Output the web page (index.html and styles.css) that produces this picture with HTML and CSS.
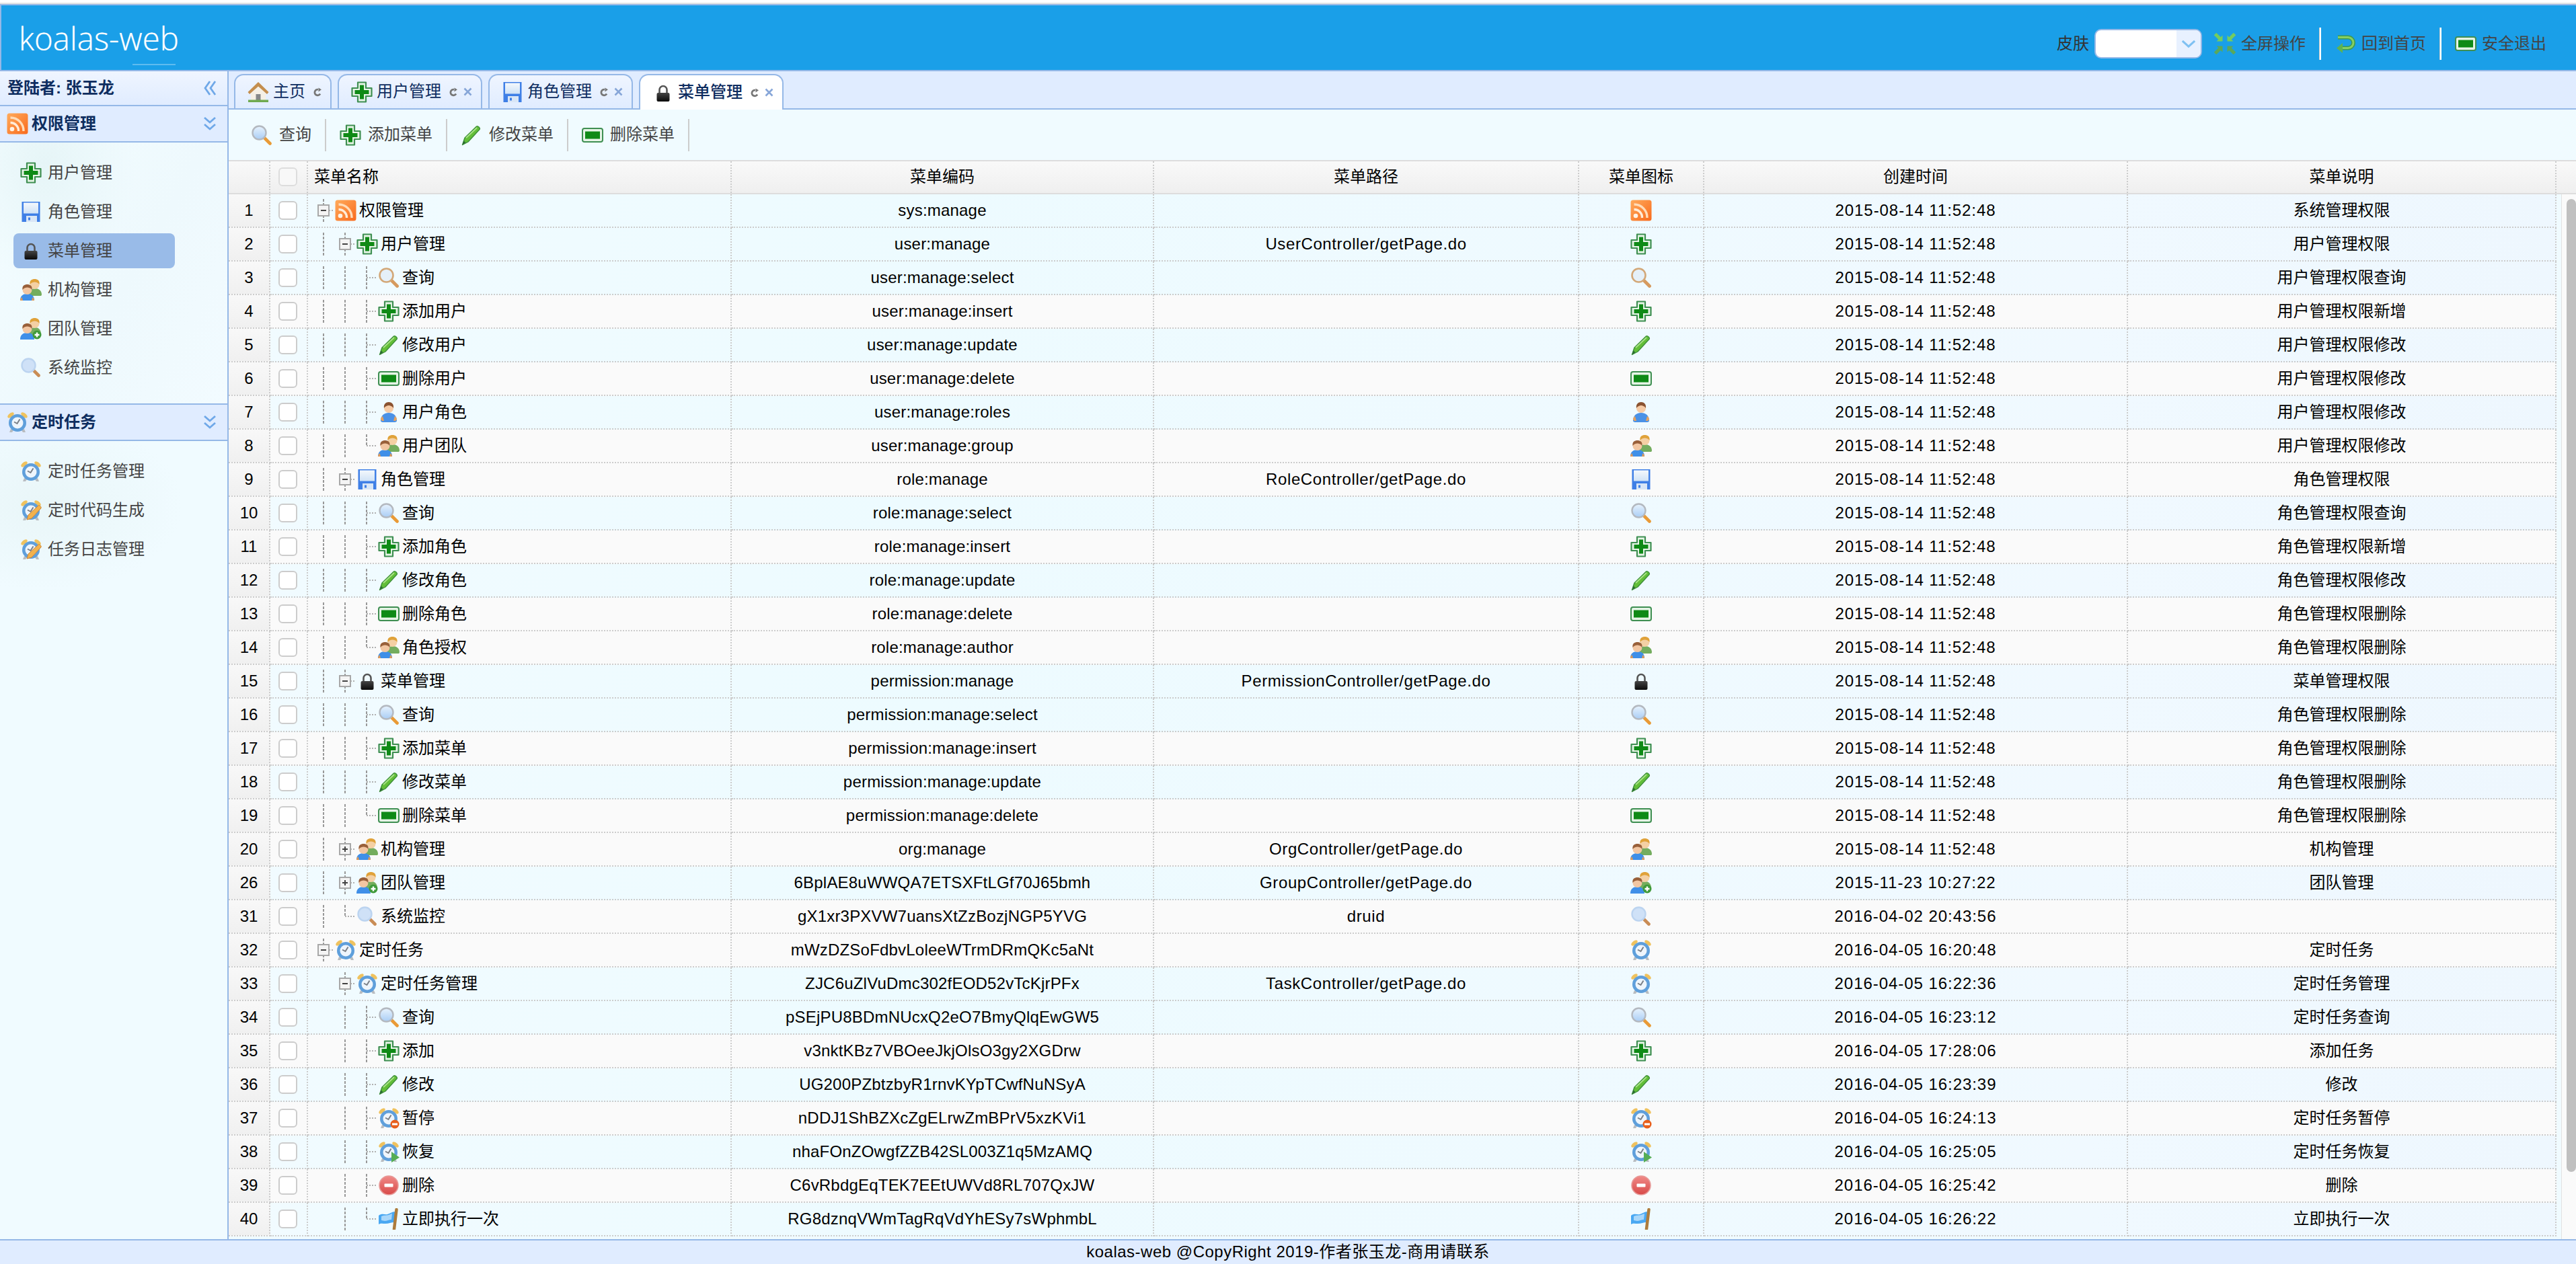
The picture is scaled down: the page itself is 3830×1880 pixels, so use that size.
FILE: index.html
```html
<!DOCTYPE html>
<html lang="zh-CN">
<head>
<meta charset="utf-8">
<title>koalas-web</title>
<link rel="stylesheet" href="styles.css">
</head>
<body>
<svg class="defs" xmlns="http://www.w3.org/2000/svg">
  <defs>
    <linearGradient id="gO" x1="0" y1="0" x2="1" y2="1"><stop offset="0" stop-color="#ffab5c"/><stop offset="1" stop-color="#f96a1c"/></linearGradient>
    <linearGradient id="gL" x1="0" y1="0" x2="0" y2="1"><stop offset="0" stop-color="#e8f3fd"/><stop offset="1" stop-color="#a9cdf5"/></linearGradient>
    <linearGradient id="gK" x1="0" y1="0" x2="0" y2="1"><stop offset="0" stop-color="#444"/><stop offset="1" stop-color="#0a0a0a"/></linearGradient>
    <linearGradient id="gR" x1="0" y1="0" x2="0" y2="1"><stop offset="0" stop-color="#f08a88"/><stop offset="1" stop-color="#d84a48"/></linearGradient>
    <linearGradient id="gF" x1="0" y1="0" x2="0" y2="1"><stop offset="0" stop-color="#f4f8fc"/><stop offset="1" stop-color="#cfe2f6"/></linearGradient>
    <symbol id="i-plus" viewBox="0 0 32 32"><path d="M10 1.500h12v8.500h8.500v12H22v8.500H10V22H1.500V10H10z" fill="#e6f4e6" stroke="#3f8f52" stroke-width="2.200" stroke-linejoin="round"/><path d="M13 5.500h6V13h7.500v6H19v7.500h-6V19H5.500v-6H13z" fill="#0f8a16"/></symbol>
    <symbol id="i-rss" viewBox="0 0 32 32"><rect x="0.500" y="0.500" width="31" height="31" rx="3.500" fill="url(#gO)"/><circle cx="8" cy="24" r="3.300" fill="#fff2e4"/><path d="M5.500 14.500A12 12 0 0 1 17.500 27" fill="none" stroke="#ffecd8" stroke-width="3.400"/><path d="M5.500 7A19.500 19.500 0 0 1 25 27" fill="none" stroke="#ffdcb8" stroke-width="3.400"/></symbol>
    <symbol id="i-search" viewBox="0 0 32 32"><path d="M20 20l8.500 8.500" stroke="#e99a36" stroke-width="4.600" stroke-linecap="round"/><circle cx="12.500" cy="12.500" r="10" fill="url(#gL)" stroke="#b4b9c0" stroke-width="2.400"/></symbol>
    <symbol id="i-search-t" viewBox="0 0 32 32"><path d="M20 20l8.500 8.500" stroke="#d69a5e" stroke-width="4.800" stroke-linecap="round"/><circle cx="12.500" cy="12.500" r="10" fill="#e5f0f8" stroke="#d3a878" stroke-width="2.600"/></symbol>
    <symbol id="i-search-m" viewBox="0 0 32 32"><path d="M20 20l7.500 7.500" stroke="#c98c55" stroke-width="4.600" stroke-linecap="round"/><circle cx="12.500" cy="12.500" r="10" fill="#cfe1f7" stroke="#bcd4f0" stroke-width="2.400"/></symbol>
    <symbol id="i-edit" viewBox="0 0 32 32"><path d="M2.500 30.500L6 20 23.500 3c2-1.500 6 2.500 4.500 4.500L11 26z" fill="#62be38" stroke="#3d8f3a" stroke-width="1.400" stroke-linejoin="round"/><path d="M8 20L24 5" stroke="#a9e288" stroke-width="1.800"/><path d="M2.500 30.500L4.500 24.500l3 2.500z" fill="#2c6a35"/></symbol>
    <symbol id="i-minus" viewBox="0 0 32 32"><rect x="1" y="6" width="30" height="20" rx="3" fill="#e6f4e6" stroke="#3f8f52" stroke-width="2"/><rect x="5" y="10.500" width="22" height="11" fill="#0f8a16"/></symbol>
    <symbol id="i-user" viewBox="0 0 32 32"><path d="M4 29c0-8 5-12 12-12s12 4 12 12c0 1-2 2-3 2H7c-1 0-3-1-3-2z" fill="#4a91e6"/><path d="M4 27c0-2 1-4 3-5l2 7H6zM28 27c0-2-1-4-3-5l-2 7h3z" fill="#e8a25e"/><circle cx="16" cy="10" r="7" fill="#f6cba6"/><path d="M9 10c-1-6 3-9 7-9s8 3 7 9c-2-3-5-4-7-4s-5 1-7 4z" fill="#8a5230"/></symbol>
    <symbol id="i-users" viewBox="0 0 32 32"><path d="M13 25c0-8 4-11 9-11s10 3 10 9c0 1-1 2-1 2z" fill="#74ad5e"/><circle cx="21.500" cy="8" r="7" fill="#f4d0a4"/><path d="M14.500 8c-1-6 3-8 7-8s8 2 7 8c-2-3-5-3.500-7-3.500s-5 .5-7 3.500z" fill="#e0a23a"/><path d="M0 32c0-7 4-10 10.500-10S21 25 21 32z" fill="#3f8fe8"/><path d="M0 32c0-2 1-4 2.500-5L4 32zM21 32c0-2-1-4-2.500-5L17 32z" fill="#e09a58"/><circle cx="10.500" cy="16" r="7" fill="#f2c6a2"/><path d="M3.500 16c-1-6 3-8 7-8s8 2 7 8c-2-3-5-3.500-7-3.500s-5 .5-7 3.500z" fill="#99603a"/></symbol>
    <symbol id="i-users-add" viewBox="0 0 32 32"><path d="M13 26c0-9 4-12 9-12s9 3 9 10v2z" fill="#74ad5e"/><circle cx="21.500" cy="8" r="7" fill="#f4d0a4"/><path d="M14.500 8c-1-6 3-8 7-8s8 2 7 8c-2-3-5-3.500-7-3.500s-5 .5-7 3.500z" fill="#e0a23a"/><path d="M0 32c0-7 4-10 10.500-10S21 25 21 32z" fill="#3f8fe8"/><circle cx="10.500" cy="16" r="7" fill="#f2c6a2"/><path d="M3.500 16c-1-6 3-8 7-8s8 2 7 8c-2-3-5-3.500-7-3.500s-5 .5-7 3.500z" fill="#99603a"/><circle cx="25" cy="25" r="6.500" fill="#3f9a3a"/><path d="M25 21.500v7M21.500 25h7" stroke="#fff" stroke-width="2.400"/></symbol>
    <symbol id="i-floppy" viewBox="0 0 32 32"><rect x="2.500" y="1" width="27" height="30" fill="#3f7fe6"/><rect x="5" y="2.500" width="22" height="16" fill="url(#gF)"/><rect x="9" y="22" width="16" height="9" fill="#d9e6f6"/><rect x="12" y="24.500" width="3" height="4" fill="#3f7fe6"/></symbol>
    <symbol id="i-lock" viewBox="0 0 32 32"><path d="M10.500 17v-5.500a5.500 5.500 0 0 1 11 0V17" fill="none" stroke="#555" stroke-width="2.600"/><rect x="6.500" y="16" width="19" height="13" rx="2" fill="url(#gK)"/></symbol>
    <g id="clock-base"><ellipse cx="6" cy="5.500" rx="5.500" ry="3" transform="rotate(-38 6 5.500)" fill="#efc25e"/><ellipse cx="26" cy="5.500" rx="5.500" ry="3" transform="rotate(38 26 5.500)" fill="#efc25e"/><path d="M6 26l-2 5h4l2-3zM26 26l2 5h-4l-2-3z" fill="#b8bcc0"/><circle cx="16" cy="17" r="13" fill="#5f9fdb"/><circle cx="16" cy="17" r="8.500" fill="#eef5fc"/><path d="M19.500 11.500L15.500 18l-4.500-2.500" fill="none" stroke="#7a7f86" stroke-width="2"/></g>
    <symbol id="i-clock" viewBox="0 0 32 32"><use href="#clock-base"/></symbol>
    <symbol id="i-clock-e" viewBox="0 0 32 32"><use href="#clock-base"/><path d="M10 30l2-7L27 9c2-1 5 2 4 4L17 28z" fill="#f2b24e" stroke="#c8863a" stroke-width="1"/></symbol>
    <symbol id="i-clock-p" viewBox="0 0 32 32"><use href="#clock-base"/><circle cx="25" cy="25" r="6.500" fill="#e85f1c"/><rect x="21" y="23.500" width="8" height="3" fill="#fff"/></symbol>
    <symbol id="i-clock-r" viewBox="0 0 32 32"><use href="#clock-base"/><path d="M20 16l12 8.500L20 32z" fill="#55ad55"/></symbol>
    <symbol id="i-stop" viewBox="0 0 32 32"><circle cx="16" cy="16" r="14" fill="url(#gR)" stroke="#e79a98" stroke-width="1.600"/><rect x="9.500" y="13.500" width="13" height="5" rx="1" fill="#fff"/></symbol>
    <symbol id="i-flag" viewBox="0 0 32 32"><path d="M1 11c5-4 9-1 13-2s7-4 12-4l-2 16c-4 0-8 2-13 2-4 0-7-1-10 1z" fill="#4aa8f2"/><path d="M5 12c4-2 8-1 11-2l5-2-1 9c-3 0-7 2-10 2l-5-1z" fill="#a9d7fa"/><path d="M27.500 2L24 31" stroke="#ad7c3c" stroke-width="4.500" stroke-linecap="round"/></symbol>
    <symbol id="i-home" viewBox="0 0 32 32"><path d="M5 17v12h22V17L16 7z" fill="#f5f0e6"/><path d="M16 1L0.500 16l2.500 3L16 7.500 29 19l2.500-3z" fill="#c48e4e"/><rect x="12.500" y="19" width="7" height="10" fill="#85888a"/><rect x="1" y="27.500" width="30" height="3.500" fill="#6fa950"/></symbol>
    <g id="fs-arrow"><path d="M1.500 1.500l7 7" stroke="currentColor" stroke-width="5"/><path d="M12.500 3.500v9h-9z" fill="currentColor"/></g>
    <symbol id="i-fs" viewBox="0 0 32 32"><use href="#fs-arrow" color="#74cc5e"/><use href="#fs-arrow" color="#74cc5e" transform="matrix(-1 0 0 1 32 0)"/><use href="#fs-arrow" color="#5aa85a" transform="matrix(1 0 0 -1 0 32)"/><use href="#fs-arrow" color="#5aa85a" transform="matrix(-1 0 0 -1 32 32)"/></symbol>
    <symbol id="i-back" viewBox="0 0 32 32"><path d="M5 6.500h15a8 8 0 0 1 0 16H11" fill="none" stroke="#3f9a4e" stroke-width="6"/><path d="M5 6.500h15a8 8 0 0 1 0 16H11" fill="none" stroke="#86cf62" stroke-width="3"/><path d="M12 15v15l-9-7.500z" fill="#5fb350"/></symbol>
    <symbol id="i-refresh" viewBox="0 0 12 14"><path d="M10 9.500A4.300 4.300 0 1 1 7 3.200" fill="none" stroke="#777" stroke-width="2.800"/><path d="M7.500 0.500L12 3.200 7.500 6.500z" fill="#777"/></symbol>
    <symbol id="i-x" viewBox="0 0 13 13"><path d="M1.500 1.500l10 10M11.500 1.500l-10 10" stroke="#87a6d8" stroke-width="2.600"/></symbol>
    <symbol id="i-ll" viewBox="0 0 20 24"><path d="M10 2L3 12l7 10M18 2L11 12l7 10" fill="none" stroke="#6fa8e8" stroke-width="2.800"/></symbol>
    <symbol id="i-dd" viewBox="0 0 20 24"><path d="M2 3l8 7 8-7M2 13l8 7 8-7" fill="none" stroke="#6fa8e8" stroke-width="2.800"/></symbol>
    <symbol id="i-down" viewBox="0 0 24 14"><path d="M2 2l10 9 10-9" fill="none" stroke="#7fc1f2" stroke-width="3.400"/></symbol>
  </defs>
</svg>

<header class="topbar">
  <div class="logo">koalas-web</div>
  <div class="top-right">
    <span class="skin-label">皮肤</span>
    <div class="skin-select"><span class="skin-value"></span><span class="skin-arrow"><svg class="down"><use href="#i-down"/></svg></span></div>
    <a class="top-link first"><svg class="ic"><use href="#i-fs"/></svg><span>全屏操作</span></a>
    <i class="top-sep"></i>
    <a class="top-link"><svg class="ic"><use href="#i-back"/></svg><span>回到首页</span></a>
    <i class="top-sep"></i>
    <a class="top-link last"><svg class="ic"><use href="#i-minus"/></svg><span>安全退出</span></a>
  </div>
</header>

<div class="main">
  <aside class="side">
    <div class="login"><span>登陆者: 张玉龙</span><svg class="chev"><use href="#i-ll"/></svg></div>
    <div class="acc-head"><svg class="ic"><use href="#i-rss"/></svg><span class="acc-title">权限管理</span><svg class="chev"><use href="#i-dd"/></svg></div>
    <nav class="acc-panel one">
      <a class="item"><svg class="ic"><use href="#i-plus"/></svg>用户管理</a>
      <a class="item"><svg class="ic"><use href="#i-floppy"/></svg>角色管理</a>
      <a class="item on"><svg class="ic"><use href="#i-lock"/></svg>菜单管理</a>
      <a class="item"><svg class="ic"><use href="#i-users"/></svg>机构管理</a>
      <a class="item"><svg class="ic"><use href="#i-users-add"/></svg>团队管理</a>
      <a class="item"><svg class="ic"><use href="#i-search-m"/></svg>系统监控</a>
    </nav>
    <div class="acc-head second"><svg class="ic"><use href="#i-clock"/></svg><span class="acc-title">定时任务</span><svg class="chev"><use href="#i-dd"/></svg></div>
    <nav class="acc-panel two">
      <a class="item"><svg class="ic"><use href="#i-clock"/></svg>定时任务管理</a>
      <a class="item"><svg class="ic"><use href="#i-clock-e"/></svg>定时代码生成</a>
      <a class="item"><svg class="ic"><use href="#i-clock-e"/></svg>任务日志管理</a>
    </nav>
  </aside>

  <section class="content">
    <div class="tabs">
      <div class="tab t-home"><svg class="ic"><use href="#i-home"/></svg><span class="tab-t">主页</span><svg class="refresh"><use href="#i-refresh"/></svg></div>
      <div class="tab"><svg class="ic"><use href="#i-plus"/></svg><span class="tab-t">用户管理</span><svg class="refresh"><use href="#i-refresh"/></svg><svg class="close"><use href="#i-x"/></svg></div>
      <div class="tab"><svg class="ic"><use href="#i-floppy"/></svg><span class="tab-t">角色管理</span><svg class="refresh"><use href="#i-refresh"/></svg><svg class="close"><use href="#i-x"/></svg></div>
      <div class="tab sel"><svg class="ic"><use href="#i-lock"/></svg><span class="tab-t">菜单管理</span><svg class="refresh"><use href="#i-refresh"/></svg><svg class="close"><use href="#i-x"/></svg></div>
    </div>
    <div class="toolbar">
      <a class="tb-btn"><svg class="ic"><use href="#i-search"/></svg>查询</a><i class="tb-sep"></i>
      <a class="tb-btn"><svg class="ic"><use href="#i-plus"/></svg>添加菜单</a><i class="tb-sep"></i>
      <a class="tb-btn"><svg class="ic"><use href="#i-edit"/></svg>修改菜单</a><i class="tb-sep"></i>
      <a class="tb-btn"><svg class="ic"><use href="#i-minus"/></svg>删除菜单</a><i class="tb-sep"></i>
    </div>
    <div class="grid-head">
      <table class="grid">
        <colgroup><col class="c1"><col class="c2"><col class="c3"><col class="c4"><col class="c5"><col class="c6"><col class="c7"><col class="c8"></colgroup>
        <tr><th></th><th><div class="cb head"></div></th><th class="name">菜单名称</th><th>菜单编码</th><th>菜单路径</th><th>菜单图标</th><th>创建时间</th><th>菜单说明</th></tr>
      </table>
    </div>
    <div class="grid-body">
      <table class="grid">
        <colgroup><col class="c1"><col class="c2"><col class="c3"><col class="c4"><col class="c5"><col class="c6"><col class="c7"><col class="c8"></colgroup>
        <tr class="c"><td class="rn">1</td><td><div class="cb"></div></td><td><div class="tree"><span class="ln o"><i class="box"></i></span><svg class="ic"><use href="#i-rss"/></svg><span>权限管理</span></div></td><td>sys:manage</td><td></td><td><svg class="ic"><use href="#i-rss"/></svg></td><td class="tm">2015-08-14 11:52:48</td><td>系统管理权限</td></tr>
        <tr class="c"><td class="rn">2</td><td><div class="cb"></div></td><td><div class="tree"><span class="ln v"></span><span class="ln o"><i class="box"></i></span><svg class="ic"><use href="#i-plus"/></svg><span>用户管理</span></div></td><td>user:manage</td><td>UserController/getPage.do</td><td><svg class="ic"><use href="#i-plus"/></svg></td><td class="tm">2015-08-14 11:52:48</td><td>用户管理权限</td></tr>
        <tr class="c"><td class="rn">3</td><td><div class="cb"></div></td><td><div class="tree"><span class="ln v"></span><span class="ln v"></span><span class="ln t"></span><svg class="ic"><use href="#i-search-t"/></svg><span>查询</span></div></td><td>user:manage:select</td><td></td><td><svg class="ic"><use href="#i-search-t"/></svg></td><td class="tm">2015-08-14 11:52:48</td><td>用户管理权限查询</td></tr>
        <tr class="w"><td class="rn">4</td><td><div class="cb"></div></td><td><div class="tree"><span class="ln v"></span><span class="ln v"></span><span class="ln t"></span><svg class="ic"><use href="#i-plus"/></svg><span>添加用户</span></div></td><td>user:manage:insert</td><td></td><td><svg class="ic"><use href="#i-plus"/></svg></td><td class="tm">2015-08-14 11:52:48</td><td>用户管理权限新增</td></tr>
        <tr class="c"><td class="rn">5</td><td><div class="cb"></div></td><td><div class="tree"><span class="ln v"></span><span class="ln v"></span><span class="ln t"></span><svg class="ic"><use href="#i-edit"/></svg><span>修改用户</span></div></td><td>user:manage:update</td><td></td><td><svg class="ic"><use href="#i-edit"/></svg></td><td class="tm">2015-08-14 11:52:48</td><td>用户管理权限修改</td></tr>
        <tr class="w"><td class="rn">6</td><td><div class="cb"></div></td><td><div class="tree"><span class="ln v"></span><span class="ln v"></span><span class="ln t"></span><svg class="ic"><use href="#i-minus"/></svg><span>删除用户</span></div></td><td>user:manage:delete</td><td></td><td><svg class="ic"><use href="#i-minus"/></svg></td><td class="tm">2015-08-14 11:52:48</td><td>用户管理权限修改</td></tr>
        <tr class="c"><td class="rn">7</td><td><div class="cb"></div></td><td><div class="tree"><span class="ln v"></span><span class="ln v"></span><span class="ln t"></span><svg class="ic"><use href="#i-user"/></svg><span>用户角色</span></div></td><td>user:manage:roles</td><td></td><td><svg class="ic"><use href="#i-user"/></svg></td><td class="tm">2015-08-14 11:52:48</td><td>用户管理权限修改</td></tr>
        <tr class="w"><td class="rn">8</td><td><div class="cb"></div></td><td><div class="tree"><span class="ln v"></span><span class="ln v"></span><span class="ln l"></span><svg class="ic"><use href="#i-users"/></svg><span>用户团队</span></div></td><td>user:manage:group</td><td></td><td><svg class="ic"><use href="#i-users"/></svg></td><td class="tm">2015-08-14 11:52:48</td><td>用户管理权限修改</td></tr>
        <tr class="w"><td class="rn">9</td><td><div class="cb"></div></td><td><div class="tree"><span class="ln v"></span><span class="ln o"><i class="box"></i></span><svg class="ic"><use href="#i-floppy"/></svg><span>角色管理</span></div></td><td>role:manage</td><td>RoleController/getPage.do</td><td><svg class="ic"><use href="#i-floppy"/></svg></td><td class="tm">2015-08-14 11:52:48</td><td>角色管理权限</td></tr>
        <tr class="c"><td class="rn">10</td><td><div class="cb"></div></td><td><div class="tree"><span class="ln v"></span><span class="ln v"></span><span class="ln t"></span><svg class="ic"><use href="#i-search"/></svg><span>查询</span></div></td><td>role:manage:select</td><td></td><td><svg class="ic"><use href="#i-search"/></svg></td><td class="tm">2015-08-14 11:52:48</td><td>角色管理权限查询</td></tr>
        <tr class="w"><td class="rn">11</td><td><div class="cb"></div></td><td><div class="tree"><span class="ln v"></span><span class="ln v"></span><span class="ln t"></span><svg class="ic"><use href="#i-plus"/></svg><span>添加角色</span></div></td><td>role:manage:insert</td><td></td><td><svg class="ic"><use href="#i-plus"/></svg></td><td class="tm">2015-08-14 11:52:48</td><td>角色管理权限新增</td></tr>
        <tr class="c"><td class="rn">12</td><td><div class="cb"></div></td><td><div class="tree"><span class="ln v"></span><span class="ln v"></span><span class="ln t"></span><svg class="ic"><use href="#i-edit"/></svg><span>修改角色</span></div></td><td>role:manage:update</td><td></td><td><svg class="ic"><use href="#i-edit"/></svg></td><td class="tm">2015-08-14 11:52:48</td><td>角色管理权限修改</td></tr>
        <tr class="w"><td class="rn">13</td><td><div class="cb"></div></td><td><div class="tree"><span class="ln v"></span><span class="ln v"></span><span class="ln t"></span><svg class="ic"><use href="#i-minus"/></svg><span>删除角色</span></div></td><td>role:manage:delete</td><td></td><td><svg class="ic"><use href="#i-minus"/></svg></td><td class="tm">2015-08-14 11:52:48</td><td>角色管理权限删除</td></tr>
        <tr class="w"><td class="rn">14</td><td><div class="cb"></div></td><td><div class="tree"><span class="ln v"></span><span class="ln v"></span><span class="ln l"></span><svg class="ic"><use href="#i-users"/></svg><span>角色授权</span></div></td><td>role:manage:author</td><td></td><td><svg class="ic"><use href="#i-users"/></svg></td><td class="tm">2015-08-14 11:52:48</td><td>角色管理权限删除</td></tr>
        <tr class="c"><td class="rn">15</td><td><div class="cb"></div></td><td><div class="tree"><span class="ln v"></span><span class="ln o"><i class="box"></i></span><svg class="ic"><use href="#i-lock"/></svg><span>菜单管理</span></div></td><td>permission:manage</td><td>PermissionController/getPage.do</td><td><svg class="ic"><use href="#i-lock"/></svg></td><td class="tm">2015-08-14 11:52:48</td><td>菜单管理权限</td></tr>
        <tr class="c"><td class="rn">16</td><td><div class="cb"></div></td><td><div class="tree"><span class="ln v"></span><span class="ln v"></span><span class="ln t"></span><svg class="ic"><use href="#i-search"/></svg><span>查询</span></div></td><td>permission:manage:select</td><td></td><td><svg class="ic"><use href="#i-search"/></svg></td><td class="tm">2015-08-14 11:52:48</td><td>角色管理权限删除</td></tr>
        <tr class="w"><td class="rn">17</td><td><div class="cb"></div></td><td><div class="tree"><span class="ln v"></span><span class="ln v"></span><span class="ln t"></span><svg class="ic"><use href="#i-plus"/></svg><span>添加菜单</span></div></td><td>permission:manage:insert</td><td></td><td><svg class="ic"><use href="#i-plus"/></svg></td><td class="tm">2015-08-14 11:52:48</td><td>角色管理权限删除</td></tr>
        <tr class="c"><td class="rn">18</td><td><div class="cb"></div></td><td><div class="tree"><span class="ln v"></span><span class="ln v"></span><span class="ln t"></span><svg class="ic"><use href="#i-edit"/></svg><span>修改菜单</span></div></td><td>permission:manage:update</td><td></td><td><svg class="ic"><use href="#i-edit"/></svg></td><td class="tm">2015-08-14 11:52:48</td><td>角色管理权限删除</td></tr>
        <tr class="w"><td class="rn">19</td><td><div class="cb"></div></td><td><div class="tree"><span class="ln v"></span><span class="ln v"></span><span class="ln l"></span><svg class="ic"><use href="#i-minus"/></svg><span>删除菜单</span></div></td><td>permission:manage:delete</td><td></td><td><svg class="ic"><use href="#i-minus"/></svg></td><td class="tm">2015-08-14 11:52:48</td><td>角色管理权限删除</td></tr>
        <tr class="w"><td class="rn">20</td><td><div class="cb"></div></td><td><div class="tree"><span class="ln v"></span><span class="ln o"><i class="box closed"></i></span><svg class="ic"><use href="#i-users"/></svg><span>机构管理</span></div></td><td>org:manage</td><td>OrgController/getPage.do</td><td><svg class="ic"><use href="#i-users"/></svg></td><td class="tm">2015-08-14 11:52:48</td><td>机构管理</td></tr>
        <tr class="c"><td class="rn">26</td><td><div class="cb"></div></td><td><div class="tree"><span class="ln v"></span><span class="ln o"><i class="box closed"></i></span><svg class="ic"><use href="#i-users-add"/></svg><span>团队管理</span></div></td><td>6BplAE8uWWQA7ETSXFtLGf70J65bmh</td><td>GroupController/getPage.do</td><td><svg class="ic"><use href="#i-users-add"/></svg></td><td class="tm">2015-11-23 10:27:22</td><td>团队管理</td></tr>
        <tr class="w"><td class="rn">31</td><td><div class="cb"></div></td><td><div class="tree"><span class="ln v"></span><span class="ln l"></span><svg class="ic"><use href="#i-search-m"/></svg><span>系统监控</span></div></td><td>gX1xr3PXVW7uansXtZzBozjNGP5YVG</td><td>druid</td><td><svg class="ic"><use href="#i-search-m"/></svg></td><td class="tm">2016-04-02 20:43:56</td><td></td></tr>
        <tr class="w"><td class="rn">32</td><td><div class="cb"></div></td><td><div class="tree"><span class="ln o"><i class="box"></i></span><svg class="ic"><use href="#i-clock"/></svg><span>定时任务</span></div></td><td>mWzDZSoFdbvLoleeWTrmDRmQKc5aNt</td><td></td><td><svg class="ic"><use href="#i-clock"/></svg></td><td class="tm">2016-04-05 16:20:48</td><td>定时任务</td></tr>
        <tr class="c"><td class="rn">33</td><td><div class="cb"></div></td><td><div class="tree"><span class="ln"></span><span class="ln o"><i class="box"></i></span><svg class="ic"><use href="#i-clock"/></svg><span>定时任务管理</span></div></td><td>ZJC6uZlVuDmc302fEOD52vTcKjrPFx</td><td>TaskController/getPage.do</td><td><svg class="ic"><use href="#i-clock"/></svg></td><td class="tm">2016-04-05 16:22:36</td><td>定时任务管理</td></tr>
        <tr class="c"><td class="rn">34</td><td><div class="cb"></div></td><td><div class="tree"><span class="ln"></span><span class="ln v"></span><span class="ln t"></span><svg class="ic"><use href="#i-search"/></svg><span>查询</span></div></td><td>pSEjPU8BDmNUcxQ2eO7BmyQlqEwGW5</td><td></td><td><svg class="ic"><use href="#i-search"/></svg></td><td class="tm">2016-04-05 16:23:12</td><td>定时任务查询</td></tr>
        <tr class="w"><td class="rn">35</td><td><div class="cb"></div></td><td><div class="tree"><span class="ln"></span><span class="ln v"></span><span class="ln t"></span><svg class="ic"><use href="#i-plus"/></svg><span>添加</span></div></td><td>v3nktKBz7VBOeeJkjOlsO3gy2XGDrw</td><td></td><td><svg class="ic"><use href="#i-plus"/></svg></td><td class="tm">2016-04-05 17:28:06</td><td>添加任务</td></tr>
        <tr class="c"><td class="rn">36</td><td><div class="cb"></div></td><td><div class="tree"><span class="ln"></span><span class="ln v"></span><span class="ln t"></span><svg class="ic"><use href="#i-edit"/></svg><span>修改</span></div></td><td>UG200PZbtzbyR1rnvKYpTCwfNuNSyA</td><td></td><td><svg class="ic"><use href="#i-edit"/></svg></td><td class="tm">2016-04-05 16:23:39</td><td>修改</td></tr>
        <tr class="w"><td class="rn">37</td><td><div class="cb"></div></td><td><div class="tree"><span class="ln"></span><span class="ln v"></span><span class="ln t"></span><svg class="ic"><use href="#i-clock-p"/></svg><span>暂停</span></div></td><td>nDDJ1ShBZXcZgELrwZmBPrV5xzKVi1</td><td></td><td><svg class="ic"><use href="#i-clock-p"/></svg></td><td class="tm">2016-04-05 16:24:13</td><td>定时任务暂停</td></tr>
        <tr class="c"><td class="rn">38</td><td><div class="cb"></div></td><td><div class="tree"><span class="ln"></span><span class="ln v"></span><span class="ln t"></span><svg class="ic"><use href="#i-clock-r"/></svg><span>恢复</span></div></td><td>nhaFOnZOwgfZZB42SL003Z1q5MzAMQ</td><td></td><td><svg class="ic"><use href="#i-clock-r"/></svg></td><td class="tm">2016-04-05 16:25:05</td><td>定时任务恢复</td></tr>
        <tr class="w"><td class="rn">39</td><td><div class="cb"></div></td><td><div class="tree"><span class="ln"></span><span class="ln v"></span><span class="ln t"></span><svg class="ic"><use href="#i-stop"/></svg><span>删除</span></div></td><td>C6vRbdgEqTEK7EEtUWVd8RL707QxJW</td><td></td><td><svg class="ic"><use href="#i-stop"/></svg></td><td class="tm">2016-04-05 16:25:42</td><td>删除</td></tr>
        <tr class="c"><td class="rn">40</td><td><div class="cb"></div></td><td><div class="tree"><span class="ln"></span><span class="ln v"></span><span class="ln l"></span><svg class="ic"><use href="#i-flag"/></svg><span>立即执行一次</span></div></td><td>RG8dznqVWmTagRqVdYhESy7sWphmbL</td><td></td><td><svg class="ic"><use href="#i-flag"/></svg></td><td class="tm">2016-04-05 16:26:22</td><td>立即执行一次</td></tr>
      </table>
      <div class="scroll"><div class="thumb"></div></div>
    </div>
  </section>
</div>

<footer class="foot">koalas-web @CopyRight 2019-作者张玉龙-商用请联系</footer>
</body>
</html>
```

FILE: styles.css
```css
* { box-sizing: border-box; }
html, body { margin: 0; height: 100%; }
body {
  display: flex;
  flex-direction: column;
  height: 1880px;
  overflow: hidden;
  padding-top: 4px;
  background: #fff;
  font: 24px/1.2 "Liberation Sans", "Noto Sans CJK SC", sans-serif;
  color: #000;
}
.defs { display: block; width: 0; height: 0; flex: none; }
.ic { width: 32px; height: 32px; flex: none; display: block; filter: blur(.35px); }
a { color: inherit; text-decoration: none; }
i { font-style: normal; }

/* top bar */
.topbar {
  flex: none;
  height: 102px;
  display: flex;
  justify-content: space-between;
  align-items: center;
  background: #1a9fe8;
  border-top: 2px solid #e4e4e4;
  box-shadow: inset 0 2px 0 #95b8e7, inset 2px 0 0 #95b8e7;
  border-bottom: 2px solid #95b8e7;
}
.logo {
  position: relative;
  margin: 4px 0 0 28px;
  font: 300 47.5px/1 "Open Sans", sans-serif;
  color: #fff;
  text-shadow: 0 0 1px rgba(255, 255, 255, .6);
}
.logo::after {
  content: "";
  position: absolute;
  left: 169px;
  bottom: -16px;
  width: 64px;
  height: 2px;
  background: rgba(255, 255, 255, .3);
}
.top-right { display: flex; align-items: center; padding: 20px 44px 0 0; color: #444; }
.skin-label { color: #333; margin-right: 8px; }
.skin-select {
  width: 160px;
  height: 44px;
  display: flex;
  border: 2px solid #95b8e7;
  border-radius: 10px;
  overflow: hidden;
  background: #fff;
}
.skin-value { flex: 1; }
.skin-arrow { width: 36px; display: flex; align-items: center; justify-content: center; background: #e8f1ff; }
.down { width: 22px; height: 13px; }
.top-link { display: flex; align-items: center; gap: 8px; padding: 0 20px; }
.top-link.first { padding-left: 18px; }
.top-link.last { padding-right: 0; }
.top-sep { width: 3px; height: 48px; background: #fff; border-left: 1px solid #ccc; }

/* main */
.main { flex: 1; min-height: 0; display: flex; }
.side { flex: none; width: 340px; display: flex; flex-direction: column; border-right: 2px solid #95b8e7; }
.login {
  flex: none;
  height: 52px;
  display: flex;
  align-items: center;
  justify-content: space-between;
  padding: 0 16px 0 11px;
  background: linear-gradient(#eff5ff, #e0ecff);
  border-bottom: 2px solid #95b8e7;
  font-weight: 700;
  color: #0e2d5f;
}
.chev { width: 20px; height: 24px; flex: none; }
.acc-head {
  flex: none;
  height: 54px;
  display: flex;
  align-items: center;
  gap: 5px;
  padding: 0 16px 0 10px;
  background: #e0ecff;
  border-bottom: 2px solid #95b8e7;
  font-weight: 700;
  color: #0e2d5f;
}
.acc-head.second { height: 56px; border-top: 2px solid #95b8e7; }
.acc-title { flex: 1; }
.acc-panel { padding-top: 19px; color: #444; }
.acc-panel.one {
  flex: none;
  height: 388px;
  background: radial-gradient(ellipse at 20% 8%, #e6f5f7, transparent 35%), linear-gradient(120deg, #f3fdff, #eef9fd 55%, #f2fbff);
}
.acc-panel.two {
  flex: 1;
  background: radial-gradient(ellipse 340px 214px at 20% 8%, #e9f6f8, transparent 60%) no-repeat, #f0fbff;
}
.item {
  display: flex;
  align-items: center;
  gap: 9px;
  width: 240px;
  height: 52px;
  margin: 0 0 6px 20px;
  padding-left: 10px;
  border-radius: 8px;
}
.item.on { background: #99bbe8; }

/* content */
.content { flex: 1; min-width: 0; display: flex; flex-direction: column; background: #f0fbff; }
.tabs {
  flex: none;
  height: 57px;
  display: flex;
  gap: 9px;
  padding: 4px 0 0 8px;
  background: #e0ecff;
  border-bottom: 2px solid #95b8e7;
}
.tab {
  display: flex;
  align-items: center;
  width: 215px;
  padding-left: 18px;
  border: 2px solid #95b8e7;
  border-bottom: 0;
  border-radius: 14px 14px 0 0;
  background: linear-gradient(#eff5ff, #e0ecff);
  color: #0e2d5f;
}
.tab.t-home { width: 145px; }
.tab.sel { margin-bottom: -2px; background: #fff; font-weight: 500; }
.tab-t { margin-left: 6px; }
.refresh { width: 12px; height: 14px; margin-left: 12px; flex: none; }
.close { width: 13px; height: 13px; margin-left: 9px; flex: none; }
.toolbar { flex: none; height: 75px; display: flex; align-items: center; padding-left: 13px; color: #444; }
.tb-btn { display: flex; align-items: center; gap: 10px; padding: 0 20px; }
.tb-sep { width: 2px; height: 48px; background: #ccc; }

/* grid */
.grid-head {
  flex: none;
  height: 51px;
  background: linear-gradient(#f9f9f9, #efefef);
  border-top: 2px solid #ddd;
  border-bottom: 2px solid #ddd;
}
.grid { border-collapse: separate; border-spacing: 0; table-layout: fixed; width: 3461px; flex: none; }
.c1 { width: 62px; } .c2 { width: 56px; } .c3 { width: 630px; } .c4 { width: 628px; }
.c5 { width: 632px; } .c6 { width: 186px; } .c7 { width: 630px; } .c8 { width: 637px; }
.grid th, .grid td {
  padding: 0;
  text-align: center;
  vertical-align: middle;
  white-space: nowrap;
  font-weight: 400;
  border-right: 2px dotted #ccc;
}
.grid th { height: 47px; }
.grid th.name { text-align: left; padding-left: 9px; }
.grid td { height: 50px; border-bottom: 2px dotted #ccc; }
.grid td:nth-child(4) { letter-spacing: .2px; }
.grid td:nth-child(5) { letter-spacing: .6px; }
.grid td .ic { margin: 0 auto; }
.grid tr.c { background: linear-gradient(90deg, #f1fbff, #edfbff 30%, #f0f9ff 80%, #eef7fe); }
.grid tr.w { background: #fafafa; }
.grid td.rn { background: linear-gradient(#f8f8f8, #f0f0f0); }
.grid td.tm { letter-spacing: .95px; }
.cb {
  width: 28px;
  height: 28px;
  margin: 0 auto 1px;
  background: #fff;
  border: 2px solid #ccc;
  border-radius: 6px;
  position: relative;
  left: -1px;
}
.cb.head { background: #f8f8f8; border-color: #ddd; }
.tree { display: flex; align-items: center; padding-left: 7px; }
.tree > span:last-child { margin-left: 4px; }
.grid td .tree .ic { margin: 0 0 0 1px; }
.ln { position: relative; display: flex; flex: none; align-items: center; justify-content: center; width: 32px; height: 34px; }
.ln.v::before, .ln.t::before, .ln.l::before, .ln.o::before {
  content: "";
  position: absolute;
  left: 15px;
  top: 0;
  bottom: 0;
  width: 2px;
  background: repeating-linear-gradient(#999 0 4px, transparent 4px 6px);
}
.ln.l::before { bottom: 16px; }
.ln.t::after, .ln.l::after, .ln.o::after {
  content: "";
  position: absolute;
  left: 16px;
  right: 0;
  top: 16px;
  height: 2px;
  background: repeating-linear-gradient(90deg, #b0b0b0 0 2px, transparent 2px 4px);
}
.box {
  position: relative;
  z-index: 1;
  width: 18px;
  height: 18px;
  background: #f4f4f4;
  border: 2px solid #a8a8a8;
}
.box::before {
  content: "";
  position: absolute;
  left: 3px;
  top: 6px;
  width: 8px;
  height: 2px;
  background: #444;
}
.box.closed::after {
  content: "";
  position: absolute;
  left: 6px;
  top: 3px;
  width: 2px;
  height: 8px;
  background: #444;
}
.grid-body { flex: 1; min-height: 0; display: flex; align-items: flex-start; background: #f0fbff; }
.scroll { flex: 1; align-self: stretch; margin-left: 7px; padding: 7px 0 0 7px; background: #fafafa; border-left: 1px solid #e2e2e2; }
.thumb { height: 1447px; background: #c0c0c0; border-radius: 8px; }

/* footer */
.foot {
  flex: none;
  height: 37px;
  display: flex;
  align-items: center;
  justify-content: center;
  background: #e0ecff;
  border-top: 2px solid #95b8e7;
  letter-spacing: .5px;
}
```
